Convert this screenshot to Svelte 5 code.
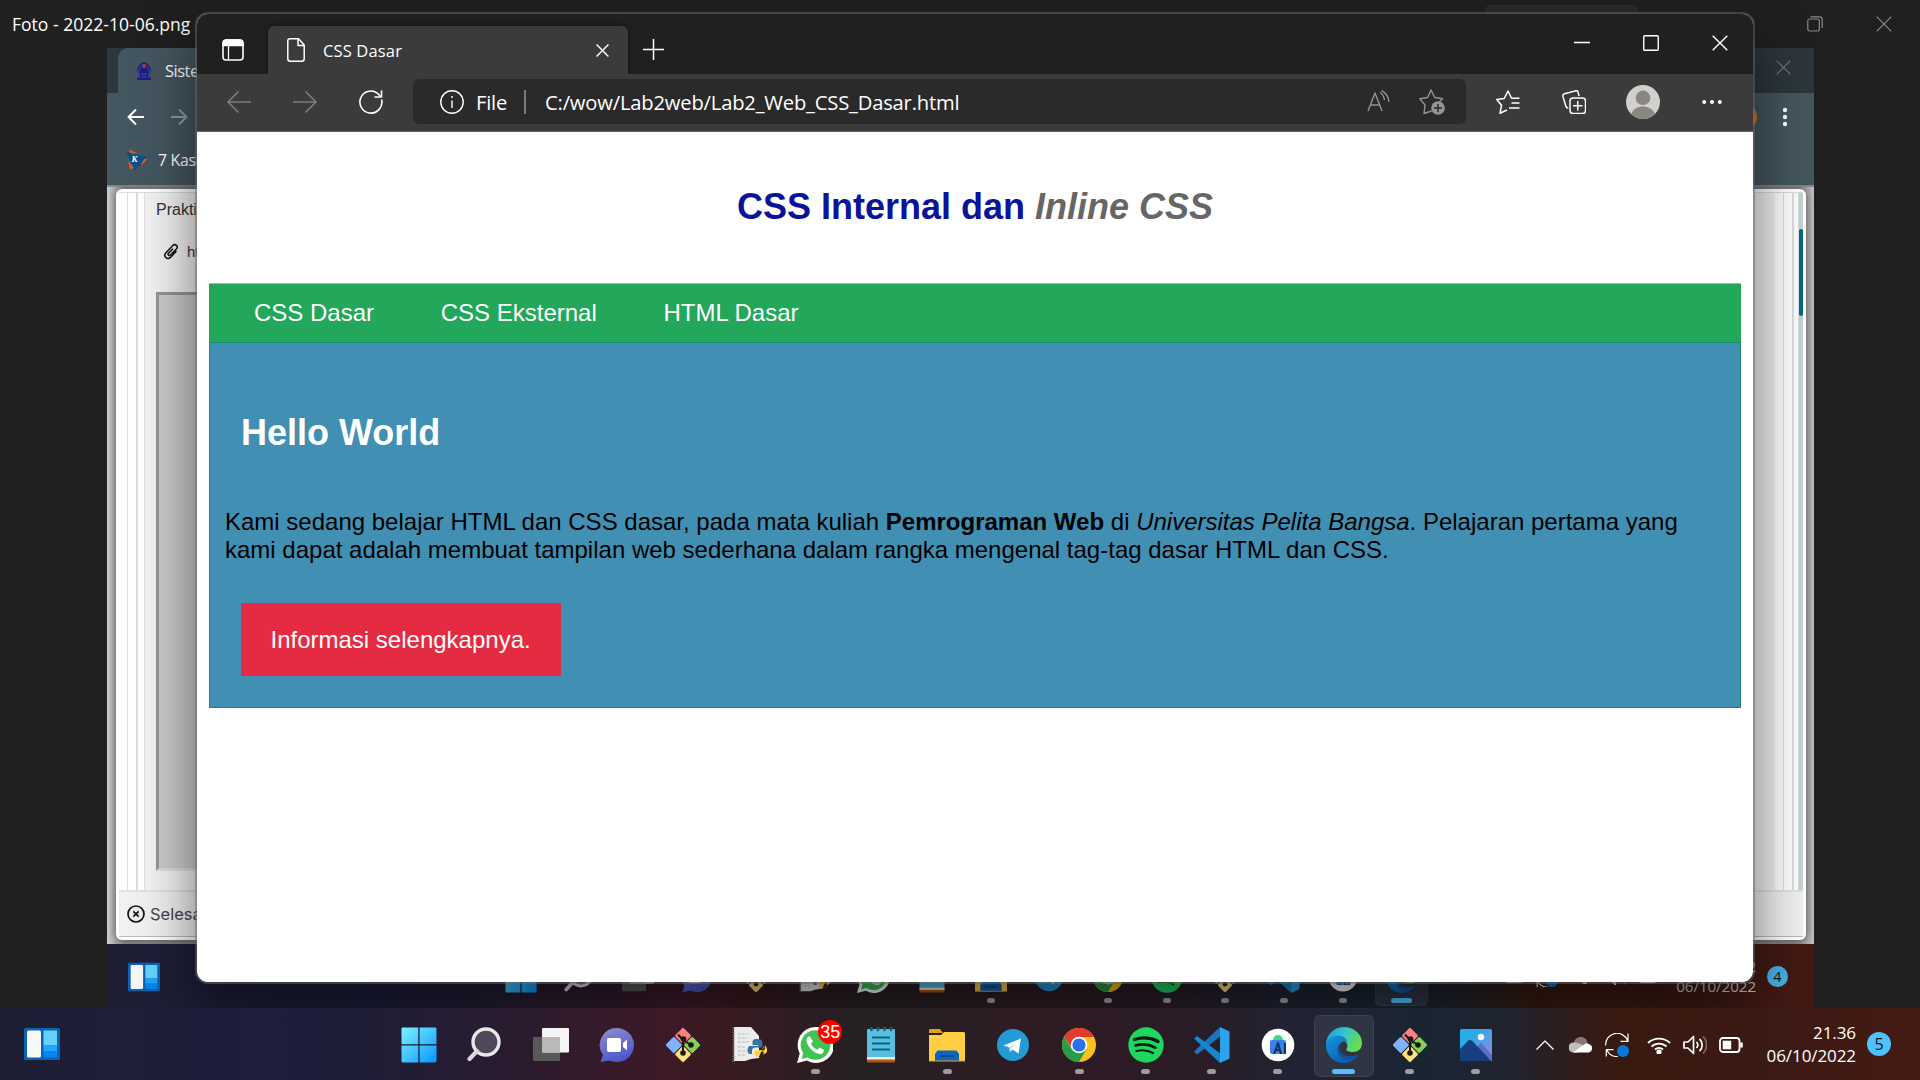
<script>
  const apps = [
    { icon: 'start' }, { icon: 'search' }, { icon: 'views' }, { icon: 'chat' },
    { icon: 'git' }, { icon: 'python' }, { icon: 'whatsapp', open: true, badge: '35' },
    { icon: 'notepad' }, { icon: 'folder', open: true }, { icon: 'telegram' },
    { icon: 'chrome', open: true }, { icon: 'spotify', open: true },
    { icon: 'vscode', open: true }, { icon: 'studio', open: true },
    { icon: 'edge', open: true, active: true }, { icon: 'git', open: true },
    { icon: 'photos', open: true }
  ];
  const photoApps = [
    { icon: 'start' }, { icon: 'search' }, { icon: 'views' }, { icon: 'chat' },
    { icon: 'git' }, { icon: 'python' }, { icon: 'whatsapp' }, { icon: 'notepad' },
    { icon: 'folder', open: true }, { icon: 'telegram' }, { icon: 'chrome', open: true },
    { icon: 'spotify', open: true }, { icon: 'git', open: true },
    { icon: 'vscode', open: true }, { icon: 'studio', open: true },
    { icon: 'edge', open: true, active: true }
  ];
  const menu = ['CSS Dasar', 'CSS Eksternal', 'HTML Dasar'];
</script>

{#snippet appIcon(name)}
  <svg class="app-icon" viewBox="0 0 36 36">
    {#if name === 'widgets'}
      <rect y="2" width="36" height="32" rx="1.5" fill="#0b63b5" />
      <rect x="3" y="4.500" width="14" height="27" rx="1.500" fill="#f7f7f7" />
      <rect x="19.500" y="4.500" width="13.500" height="15" fill="#63d3fb" />
      <rect x="19.500" y="19.500" width="13.500" height="6" fill="#1ea7fb" />
      <rect x="19.500" y="25.500" width="13.500" height="6" fill="#0786ee" />
    {:else if name === 'start'}
      <defs><linearGradient id="win" x1="0" y1="0" x2="1" y2="1"><stop stop-color="#7cf3ff" /><stop offset="1" stop-color="#0795ff" /></linearGradient></defs>
      <path d="M1.500.5h15.800v16.800H.5V1.500zM18.600.5h15.900l1 1v15.800H18.600zM.5 18.600h16.800v16.900H1.500l-1-1zM18.600 18.600h16.900v15.900l-1 1H18.600z" fill="url(#win)" />
    {:else if name === 'search'}
      <circle cx="19" cy="15" r="13" fill="#50475a" stroke="#e8e8ea" stroke-width="3.400" />
      <path d="M10 24l-7.500 8" stroke="#dadade" stroke-width="4.200" stroke-linecap="round" />
    {:else if name === 'views'}
      <rect x="0" y="10" width="27" height="24" rx="1" fill="#595959" />
      <rect x="9" y="1" width="27" height="24.500" rx="1" fill="#f5f5f5" />
      <path d="M9 10h18v15.500H10l-1-1z" fill="#b9b9b9" />
    {:else if name === 'chat'}
      <defs><linearGradient id="cht" x1="0" y1="0" x2="0.4" y2="1"><stop stop-color="#8f8fcd" /><stop offset="1" stop-color="#5059c9" /></linearGradient></defs>
      <path d="M18 1a17 17 0 1 1-7 32.500L1.500 35 4 28A17 17 0 0 1 18 1z" fill="url(#cht)" />
      <rect x="8" y="11" width="14" height="14" rx="2" fill="#fff" />
      <path d="M24 16l4-3.500v11L24 20z" fill="#fff" />
    {:else if name === 'git'}
      <g transform="rotate(45 18 18)">
        <rect x="5.500" y="5.500" width="12" height="12" rx="1.500" fill="#ff7f7f" />
        <rect x="18.500" y="5.500" width="12" height="12" rx="1.500" fill="#86cf5c" />
        <rect x="18.500" y="18.500" width="12" height="12" rx="1.500" fill="#ffe07a" />
        <rect x="5.500" y="18.500" width="12" height="12" rx="1.500" fill="#80b3ff" />
      </g>
      <path d="M13 7.500l5 5.500v13M18 13l8 5" stroke="#1e1718" stroke-width="2" fill="none" />
      <circle cx="18.500" cy="12" r="2.800" fill="#1e1718" /><circle cx="26" cy="18" r="2.800" fill="#1e1718" /><circle cx="18" cy="26" r="2.800" fill="#1e1718" />
    {:else if name === 'python'}
      <path d="M3 0h17l8 9v22l-8 1-6 2H3z" fill="#ececec" />
      <path d="M2.500 0v35" stroke="#777" stroke-width="2" stroke-dasharray="1.200 1.200" />
      <path d="M7 7h10M7 11h9M7 15h11M7 20h7M7 24h9M7 28h8" stroke="#bdbdbd" stroke-width="1" stroke-dasharray="3 1" />
      <path d="M26 12c-4 0-4.500 1.500-4.500 4v2H27v1h-8c-3 0-3.500 8 0 8h2v-3.500c0-2 1.500-3 3.500-3h5c2 0 2-1.500 2-4.500 0-3-1.500-4-5.500-4z" fill="#3572a5" />
      <path d="M28 30c4 0 4.500-1.500 4.500-4v-1.500H27V23.500h5c2.500 0 2-4 1.500-5 2.500 0 4 8 .5 8l-1.500 1c0 2-2 2.500-5 2.500-3 0-4-1.500-4-3.500 0-3 2-3.500 4-3.500h3l2-2v-2" fill="#ffd43b" />
    {:else if name === 'whatsapp'}
      <path d="M18 0a18 18 0 1 1-8 33.500L0 36l2.700-9.500A18 18 0 0 1 18 0z" fill="#fff" />
      <path d="M18 3.200a14.800 14.800 0 1 1-7.400 27.300l-6 1.600 1.600-5.900A14.800 14.800 0 0 1 18 3.200z" fill="#3fc351" />
      <path d="M13 9.500c-1.500-.5-4 1.500-3.500 4.500 1 6 6.500 11.500 12.500 13 3 .6 5-1.500 5-4l-4.500-2.500-2 2.300c-3-1-5.500-3.500-6.500-6.500l2-1.800z" fill="#fff" />
    {:else if name === 'notepad'}
      <rect x="4" y="2" width="28" height="31" rx="1" fill="#59bfdd" /><rect x="4" y="30" width="28" height="3" fill="#eee" /><rect x="4" y="32.500" width="28" height="3" rx="1" fill="#b5540b" />
      <path d="M8.500 0v3M15 0v3M21.500 0v3M28 0v3" stroke="#07658c" stroke-width="2.600" stroke-linecap="round" />
      <path d="M9 10.500h18M9 16.500h18M9 22.500h18" stroke="#07658c" stroke-width="1.800" />
    {:else if name === 'folder'}
      <path d="M0 3l1-1h10l3 4H0z" fill="#dfa103" /><path d="M0 8h12l3-3h20l1 1v28H0z" fill="#ffce45" />
      <path d="M6 34v-7l2.500-3.500h19L30 27v7z" fill="#0a67bd" /><path d="M11 29h14" stroke="#063d80" stroke-width="1.500" /><path d="M0 34h36" stroke="#e8a31b" />
    {:else if name === 'telegram'}
      <circle cx="18" cy="18" r="16" fill="#239bd5" />
      <path d="M8.500 18.500L26 11.500l-2.500 15-6-4-2.500 2.500-.5-4.500z" fill="#fff" /><path d="M14 21l8-6-6 7-1 3z" fill="#bfe0f3" />
    {:else if name === 'chrome'}
      <circle cx="18" cy="18" r="17" fill="#fbc21a" />
      <path d="M3.300 9.500A17 17 0 0 1 33 10H18l-7 12z" fill="#e23c30" />
      <path d="M3.300 9.500A17 17 0 0 0 18 35l7.500-13h-15z" fill="#2a9b49" />
      <circle cx="18" cy="18" r="8.300" fill="#fff" /><circle cx="18" cy="18" r="6.600" fill="#2b72e8" />
    {:else if name === 'spotify'}
      <circle cx="18" cy="18" r="17.700" fill="#1ed75f" />
      <path d="M6.500 12.500c8-2.500 17-1.500 23.500 2" stroke="#0a1b10" stroke-width="3.300" fill="none" stroke-linecap="round" />
      <path d="M7.500 18.500c7-2 14-1 20 2.200" stroke="#0a1b10" stroke-width="2.700" fill="none" stroke-linecap="round" />
      <path d="M8.500 24c6-1.500 11.500-.8 16.500 2" stroke="#0a1b10" stroke-width="2.200" fill="none" stroke-linecap="round" />
    {:else if name === 'vscode'}
      <path d="M0 24.500L26 0l1 9L3 27.500z" fill="#1976b8" /><path d="M0 11.500l3-2.500L27 27l-1 9z" fill="#1687cf" />
      <path d="M26 0l9.500 4.500v27L26 36z" fill="#2ba3ee" />
    {:else if name === 'studio'}
      <circle cx="18" cy="18" r="16.300" fill="#fff" />
      <path d="M13 13a5 5 0 0 1 10 0z" fill="#3ddc84" /><rect x="10" y="13" width="16" height="14" rx="2" fill="#3d7fe8" />
      <path d="M14 27l4-11 3 11M15.500 23h4M25 16v11" stroke="#0b335c" stroke-width="2" fill="none" />
    {:else if name === 'edge'}
      <defs>
        <linearGradient id="edg" x1="0" y1="0" x2="1" y2=".5"><stop stop-color="#1793dc" /><stop offset=".5" stop-color="#33c5cf" /><stop offset="1" stop-color="#67dd4c" /></linearGradient>
        <linearGradient id="edb" x1="0" y1="0" x2=".8" y2="1"><stop stop-color="#1596df" /><stop offset="1" stop-color="#0b57a8" /></linearGradient>
      </defs>
      <path d="M0 17C1 6 9 0 18 0c10 0 18 7 18 16 0 6-4 9-9 9-4 0-7-1-6.500-3 2-3 1-8-4.500-9S3 12 0 17z" fill="url(#edg)" />
      <path d="M0 17c2-6 7-8.500 12-8.500 5 0 8.500 3 9 6-6-1-9 4-7.500 9 2 6 10 8 19 4C29 33 24 36 18 36 7 36-.5 27 0 17z" fill="url(#edb)" />
      <path d="M14.500 14.500c-4 4-4 13 1.500 17 5 3 12 1 16.500-4-9 4-17 2-19-4-1-4-.5-7 1-9z" fill="#1450a0" />
    {:else if name === 'photos'}
      <defs><linearGradient id="sky" x1="0" y1="0" x2="1" y2="1"><stop offset=".3" stop-color="#28abea" /><stop offset="1" stop-color="#a184d8" /></linearGradient></defs>
      <rect x="2" y="2" width="32" height="32" rx="1.500" fill="url(#sky)" />
      <path d="M17 22l6-6 11 12v6H17z" fill="#5b6cc9" /><path d="M2 22l9-9 3 .5L33 34H2z" fill="#173f80" /><circle cx="23" cy="10" r="3.200" fill="#f4f7fb" />
    {/if}
  </svg>
{/snippet}

{#snippet cross(cls)}
  <svg class={cls} viewBox="0 0 16 16"><path d="M.7.7l14.600 14.600M15.300.7L.7 15.300" /></svg>
{/snippet}

{#snippet statusIcons()}
  <div class="status">
    <svg class="chev" viewBox="0 0 18 10"><path d="M.5 9.500L9 1l8.500 8.500" /></svg>
    <svg class="cloud" viewBox="0 0 24 16"><path d="M5 12A6 6 0 0 1 5 5a7 7 0 0 1 13-1l2 5z" fill="#8b7772" /><path d="M4 15.500A4.500 4.500 0 0 1 5 5.500c4-.5 8 2 12 5l-8 5z" fill="#c4bcba" /><path d="M4 15.500l11-8a5 5 0 0 1 5-.5 4.500 4.500 0 0 1 0 8.500z" fill="#fff" /></svg>
    <svg class="sync" viewBox="0 0 24 24"><path d="M.7 12.500A11.300 11.300 0 0 1 22.500 7.500M23 .5v7.800h-7.500M1.300 23.500v-6.800H8.500M2 17.500a11.500 11.500 0 0 0 11 6" /><circle cx="18" cy="18" r="6" /></svg>
    <svg class="wifi" viewBox="0 0 24 18"><path d="M1 7a16 16 0 0 1 22 0M4.500 10.500a11 11 0 0 1 15 0M8 13.500a6 6 0 0 1 8 0" /><circle cx="12" cy="16" r="1.700" fill="#fff" /></svg>
    <svg class="sound" viewBox="0 0 24 20"><path d="M1 7h4l5.500-5.500v17L5 13H1zM13.500 7a4.500 4.500 0 0 1 0 6M16.500 4a8 8 0 0 1 0 12" /><path d="M20 1.500a12 12 0 0 1 0 17" opacity=".35" /></svg>
    <svg class="battery" viewBox="0 0 24 16"><rect x="1" y="1" width="19.500" height="14" rx="3" /><rect x="3.700" y="3.700" width="8.500" height="8.600" fill="#fff" stroke="none" /><path d="M22.500 5.500v5" stroke-width="2.500" /></svg>
  </div>
{/snippet}

<div class="desktop">
  <section class="viewer">
    <header class="viewer-bar">
      <span class="viewer-title">Foto - 2022-10-06.png</span>
      <div class="viewer-controls">
        <svg class="restore" viewBox="0 0 16 16"><rect x=".8" y="3" width="11.500" height="12" rx="2" /><path d="M3.500.8h9a2.700 2.700 0 0 1 2.700 2.700v8.500" /></svg>
        {@render cross('x16')}
      </div>
    </header>
    <div class="photo">
      <div class="p-tabs">
        <div class="p-edge"></div>
        <div class="p-tab">
          <svg class="crest" viewBox="0 0 18 20"><path d="M2 19h14v-2l-2-2 1-3 1-4-3-5-4-2-4 2-3 5 1 4 1 3-2 2z" fill="#1c1f80" /><path d="M4 17V9a5 5 0 0 1 10 0v8M6 13h6M6 16h6" stroke="#3f4cae" fill="none" /><path d="M9 3v4" stroke="#c33a36" stroke-width="2.500" /></svg>
          <span>Sistem</span>
        </div>
        <div class="p-caption">{@render cross('x14')}</div>
      </div>
      <div class="p-nav">
        <svg class="p-arrow" viewBox="0 0 18 18"><path d="M17 9H2M9 1.500L1.500 9 9 16.500" /></svg>
        <svg class="p-arrow dim" viewBox="0 0 18 18"><path d="M1 9h15M9 1.500L16.500 9 9 16.500" /></svg>
        <div class="p-avatar"></div>
        <svg class="p-dots" viewBox="0 0 6 20"><circle cx="3" cy="3" r="2.200" /><circle cx="3" cy="10" r="2.200" /><circle cx="3" cy="17" r="2.200" /></svg>
      </div>
      <div class="p-marks">
        <svg class="kmark" viewBox="0 0 22 22"><path d="M3 .5l8 3.500-7 2zM21.500 10l-6 6.500 1-6.500zM2 12l2 8.500 4-2z" fill="#d95a2b" /><path d="M.5 3L20 8 9 21.500z" fill="#07518e" /><text x="5.500" y="13">K</text></svg>
        <span>7 Kasus</span>
      </div>
      <div class="p-page">
        <div class="sheet">
          <div class="sheet-main">
            <div class="stripes"></div>
            <div class="sheet-body">
              <p class="s-title">Praktikum</p>
              <p class="s-link">
                <svg class="clip" viewBox="0 0 16 17"><path d="M13.500 8l-5.800 6.200c-3.500 3.400-8-1-4.700-4.500L9.800 2.500c2.500-2.300 6 .8 3.600 3.500L7.500 12c-1.600 1.500-3.200-.3-2-1.700L10 5.700" /></svg>
                <span>https</span>
              </p>
              <div class="frame"></div>
            </div>
            <div class="stripes right"></div>
            <div class="scroll"><div class="thumb"></div></div>
          </div>
          <div class="sheet-foot">
            <svg class="cancel" viewBox="0 0 18 18"><circle cx="9" cy="9" r="8" /><path d="M6.300 6.300l5.400 5.400M11.700 6.300l-5.400 5.400" /></svg>
            <span>Selesai</span>
          </div>
        </div>
      </div>
      <div class="taskbar small">
        <div class="side">{@render appIcon('widgets')}</div>
        <div class="apps">
          {#each photoApps as app}
            <div class="app" class:active={app.active}>
              {@render appIcon(app.icon)}
              {#if app.open}<i class="dot"></i>{/if}
            </div>
          {/each}
        </div>
        <div class="tray">
          {@render statusIcons()}
          <div class="clock"><span>19.22</span><span>06/10/2022</span></div>
          <span class="count">4</span>
        </div>
      </div>
    </div>
  </section>
  <div class="viewer-pill"></div>

  <section class="browser">
    <header class="tabstrip">
      <svg class="tabmenu" viewBox="0 0 22 22"><rect x="1" y="1" width="20" height="20" rx="3" fill="none" stroke="#fff" stroke-width="1.600" /><path d="M1 6.500V3.500L3.500 1h15L21 3.500v3z" fill="#fff" stroke="#fff" stroke-width="1.300" /><path d="M6.500 7v14" stroke="#fff" stroke-width="1.300" /></svg>
      <div class="tab">
        <svg class="doc" viewBox="0 0 18 24"><path d="M3 .8h8.500L17.200 7v13.700a2.500 2.500 0 0 1-2.500 2.500H3.300A2.500 2.500 0 0 1 .8 20.700V3A2.200 2.200 0 0 1 3 .8zM11 1v6.500h6" /></svg>
        <span>CSS Dasar</span>
        {@render cross('x12')}
      </div>
      <svg class="plus" viewBox="0 0 21 21"><path d="M10.500 0v21M0 10.500h21" /></svg>
      <div class="controls">
        <svg viewBox="0 0 16 16"><path d="M0 7.500h16" /></svg>
        <svg viewBox="0 0 16 16"><rect x=".75" y=".75" width="14.500" height="14.500" rx="1" /></svg>
        {@render cross('x16')}
      </div>
    </header>
    <div class="toolbar">
      <div class="nav-buttons">
        <svg class="faded" viewBox="0 0 24 24"><path d="M24 12H1M11.500 1.500L1 12l10.500 10.500" /></svg>
        <svg class="faded" viewBox="0 0 24 24"><path d="M0 12h23M12.500 1.500L23 12 12.500 22.500" /></svg>
        <svg viewBox="0 0 24 24"><path d="M22.600 9.500A11 11 0 1 1 18.500 3.300L22 7M22.500.5V7H15.500" /></svg>
      </div>
      <div class="address">
        <svg class="info" viewBox="0 0 24 24"><circle cx="12" cy="12" r="11.200" /><path d="M12 10.500V18M12 6v2" /></svg>
        <span class="scheme">File</span>
        <i class="rule"></i>
        <span class="url">C:/wow/Lab2web/Lab2_Web_CSS_Dasar.html</span>
        <svg class="read" viewBox="0 0 24 24"><path d="M1 21L8 3l7 18M3.500 15h9M13 2.500c2.500 1.500 4 4 4.500 7.500M14.500.5c4 2 7 6 7.500 11.500" /></svg>
        <svg class="fav" viewBox="0 0 26 26"><path d="M12.500 22L5 24.500l1-8.500L.8 9.800l7.800-1.300L12 1l3.800 7.500 7.700 1.300-3 3" /><circle cx="19" cy="19" r="6.800" /><path class="ink" d="M19 15v8M15 19h8" /></svg>
      </div>
      <svg class="tool" viewBox="0 0 24 24"><path d="M11 20l-7 3.300 1.500-8L.8 9.500l7.400-1L12 1l3.500 7.300h8M15.500 13h8M13 18h10.500" /></svg>
      <svg class="tool" viewBox="0 0 24 24"><path d="M17 6l-1-4a1.700 1.700 0 0 0-2-1.200L2.500 3.700A2.200 2.200 0 0 0 .9 6.400L3.800 16a2.500 2.500 0 0 0 2.500 2" /><rect x="8" y="8" width="15.500" height="15.500" rx="3" /><path d="M15.750 11v9.500M11 15.750h9.500" /></svg>
      <svg class="avatar" viewBox="0 0 34 34"><circle cx="17" cy="17" r="17" fill="#d1d0cc" /><circle cx="17" cy="12.800" r="7.300" fill="#8a8681" /><path d="M5 29c2-5 7-7.500 12-7.500S27 24 29 29a17 17 0 0 1-24 0z" fill="#8a8681" /></svg>
      <svg class="more" viewBox="0 0 20 6"><circle cx="2.200" cy="3" r="2" /><circle cx="10" cy="3" r="2" /><circle cx="17.800" cy="3" r="2" /></svg>
    </div>
    <main class="page">
      <h1>CSS Internal dan <em>Inline CSS</em></h1>
      <nav>
        {#each menu as item}<a href="#top">{item}</a>{/each}
      </nav>
      <div class="hero">
        <h2>Hello World</h2>
        <p>Kami sedang belajar HTML dan CSS dasar, pada mata kuliah <b>Pemrograman Web</b> di <em>Universitas Pelita Bangsa</em>. Pelajaran pertama yang kami dapat adalah membuat tampilan web sederhana dalam rangka mengenal tag-tag dasar HTML dan CSS.</p>
        <a class="button" href="#info">Informasi selengkapnya.</a>
      </div>
    </main>
  </section>

  <footer class="taskbar">
    <div class="side">{@render appIcon('widgets')}</div>
    <div class="apps">
      {#each apps as app}
        <div class="app" class:active={app.active}>
          {@render appIcon(app.icon)}
          {#if app.open}<i class="dot"></i>{/if}
          {#if app.badge}<b class="badge">{app.badge}</b>{/if}
        </div>
      {/each}
    </div>
    <div class="tray">
      {@render statusIcons()}
      <div class="clock"><span>21.36</span><span>06/10/2022</span></div>
      <span class="count">5</span>
    </div>
  </footer>
</div>

<style>
  :global(body) { margin: 0; background: #202020; }
  .desktop { position: relative; width: 1920px; height: 1080px; overflow: hidden; background: #202020; color: #fff; font-family: "Open Sans", "Noto Sans", sans-serif; }
  .desktop :global(*) { box-sizing: border-box; }
  svg { display: block; flex: none; fill: none; stroke-linejoin: round; }
  p, h1, h2 { margin: 0; }

  /* photo viewer behind the browser */
  .viewer { position: absolute; inset: 0 0 72px; }
  .viewer-bar { display: flex; justify-content: space-between; height: 48px; padding: 0 28px 0 12px; align-items: center; }
  .viewer-title { font-size: 17.5px; letter-spacing: 0.02px; }
  .viewer-controls { display: flex; gap: 53px; }
  .restore, .x16 { width: 16px; height: 16px; stroke: #8a8a8a; stroke-width: 1.2; }
  .viewer-pill { position: absolute; left: 1485px; top: 5px; width: 153px; height: 30px; border-radius: 6px; background: #2b2b2b; border: 1px solid #303030; }
  .photo { width: 1707px; height: 960px; margin-left: 107px; overflow: hidden; display: flex; flex-direction: column; background: #44565f; }
  .p-tabs { display: flex; height: 45px; background: #2c373e; }
  .p-edge { width: 11px; background: #2c373e; box-shadow: 0 0 0 #44565f; border-bottom-right-radius: 9px; }
  .p-tab { width: 200px; display: flex; align-items: center; gap: 12px; padding: 0 0 0 17px; font-size: 16.5px; letter-spacing: -0.5px; background: #44565f; border-radius: 10px 0 0; }
  .crest { width: 18px; height: 20px; }
  .p-caption { flex: 1; display: flex; justify-content: flex-end; align-items: center; padding-right: 23px; background: #2c363c; }
  .x14 { width: 15px; height: 15px; stroke: #717e84; stroke-width: 1.2; margin-top: -6px; }
  .p-nav { display: flex; height: 48px; align-items: center; padding: 0 26px 0 20px; }
  .p-arrow { width: 18px; height: 18px; stroke: #fff; stroke-width: 2; margin-right: 25px; }
  .p-arrow.dim { stroke: #8f9ba1; }
  .p-avatar { width: 26px; height: 26px; border-radius: 50%; background: #e8710a; margin-left: auto; margin-right: 25px; }
  .p-dots { width: 6px; height: 20px; fill: #fff; }
  .p-marks { display: flex; height: 44px; align-items: center; gap: 10px; padding: 0 0 7px 19px; font-size: 15.8px; letter-spacing: -0.3px; }
  .kmark { width: 22px; height: 22px; }
  .kmark text { font: italic bold 9px "Liberation Serif", serif; fill: #fff; }
  .p-page { height: 759px; padding: 2px 8px 4px 9px; background: linear-gradient(90deg, #d0d0d0, #8c8c8c 1%, #8c8c8c 99%, #c4c4c4); border-top: 2px solid #848e93; }
  .sheet { height: 100%; border-radius: 6px; border: 3px solid #fff; background: #f3f3f3; display: flex; flex-direction: column; box-shadow: 0 0 10px #555; }
  .sheet-main { flex: 1; display: flex; border-top: 1px solid #ddd; }
  .stripes { width: 26px; border-right: 1px solid #e0e0e0; background: linear-gradient(90deg, #fff 8px, #ddd 8px 9px, #fff 9px 17px, #ddd 17px 19px, #fff 19px); }
  .stripes.right { margin-left: auto; width: 24px; }
  .scroll { width: 4px; background: #c2d3d7; padding-top: 36px; }
  .thumb { height: 87px; border-radius: 2px; background: #026b87; }
  .sheet-body { width: 300px; padding: 7px 0 0 11px; color: #333; }
  .s-title { font: 16px/20px "Liberation Sans", sans-serif; }
  .s-link { display: flex; align-items: center; gap: 8px; height: 20px; margin: 21px 0 0 7px; font: 15px "Liberation Sans", sans-serif; }
  .clip { width: 16px; height: 17px; stroke: #111; stroke-width: 1.5; }
  .frame { height: 579px; margin-top: 31px; border: 3px solid #969696; border-bottom-color: #ddd; background: #cdcdcd; }
  .sheet-foot { height: 47px; display: flex; align-items: center; gap: 5px; padding-left: 8px; color: #444; font: 16.5px Inter, sans-serif; border-top: 2px solid #e2e2e2; border-bottom: 1px solid #bbb; background: #f1f1f1; }
  .cancel { width: 18px; height: 18px; stroke: #111; stroke-width: 1.7; }

  /* browser window */
  .browser { position: absolute; left: 197px; top: 14px; width: 1556px; height: 968px; border-radius: 11px; background: #fff; box-shadow: 0 0 0 2px rgba(105, 105, 105, .5), 0 24px 54px 4px rgba(0, 0, 0, .5); display: flex; flex-direction: column; overflow: hidden; }
  .tabstrip { height: 60px; flex: none; display: flex; align-items: flex-start; background: #202020; padding-left: 25px; }
  .tabmenu { width: 22px; height: 22px; margin: 25px 24px 0 0; }
  .tab { display: flex; align-items: center; width: 360px; height: 48px; margin-top: 12px; padding: 0 19px 0 19px; background: #3b3b3b; border-radius: 6px 6px 0 0; box-shadow: 0 0 5px #111; font-size: 16.5px; letter-spacing: 0.15px; }
  .doc { width: 18px; height: 24px; stroke: #fff; stroke-width: 1.5; margin-right: 18px; }
  .x12 { width: 13px; height: 13px; margin-left: auto; stroke: #fff; stroke-width: 1.8; }
  .plus { width: 21px; height: 21px; margin: 25px 0 0 15px; stroke: #fff; stroke-width: 1.5; }
  .controls { display: flex; gap: 53px; margin: 21px 25px 0 auto; }
  .controls svg { width: 16px; height: 16px; stroke: #fff; stroke-width: 1.4; }
  .toolbar { height: 58px; flex: none; display: flex; align-items: center; background: #3b3b3b; border-bottom: 1px solid #666; padding: 0 31px 2px 30px; }
  .nav-buttons { display: flex; gap: 42px; width: 186px; stroke: #fff; }
  .nav-buttons svg { width: 24px; height: 24px; stroke-width: 1.6; }
  .nav-buttons .faded { stroke: #7c7c7c; }
  .address { width: 1053px; height: 45px; border-radius: 6px; background: #2a2a2a; display: flex; align-items: center; padding: 0 21px 0 27px; font-size: 20.2px; }
  .info { width: 24px; height: 24px; stroke: #fff; stroke-width: 1.4; }
  .scheme { margin-left: 12px; width: 37px; letter-spacing: -0.2px; }
  .rule { width: 2px; height: 24px; margin-left: 11px; background: #7a7a7a; }
  .url { margin-left: 19px; letter-spacing: -0.19px; }
  .read { width: 24px; height: 24px; margin-left: auto; stroke: #949494; stroke-width: 1.4; }
  .fav { width: 26px; height: 26px; margin-left: 28px; stroke: #949494; stroke-width: 1.4; }
  .fav circle { fill: #949494; stroke: none; }
  .fav .ink { stroke: #2a2a2a; }
  .tool { width: 24px; height: 24px; margin-left: 42px; stroke: #fff; stroke-width: 1.5; }
  .tool:first-of-type { margin-left: 30px; }
  .avatar { width: 34px; height: 34px; margin-left: 40px; }
  .more { width: 20px; height: 6px; margin-left: auto; fill: #fff; }

  .page { padding: 0 12px; font: 24px/28px "Liberation Sans", Arial, sans-serif; color: #000; }
  h1 { padding-top: 54px; height: 151px; font-size: 36px; line-height: 42px; text-align: center; color: #0a149b; }
  h1 em { color: #666; }
  nav { display: flex; gap: 6.67px; height: 59px; padding-left: 15px; border-top: 1px solid #7cc9b8; background: #22a75b; }
  nav a { padding: 15px 30px; color: #fff; text-decoration: none; }
  .hero { height: 366px; border: 1px solid #1d8a67; background: #418fb2; padding: 69px 15px 0; display: flex; flex-direction: column; align-items: flex-start; }
  h2 { padding-left: 16px; font-size: 36px; line-height: 42px; color: #fff; }
  .hero p { margin-top: 54px; }
  .button { margin: 39px 0 0 16px; padding: 23px 30px 22px 29.500px; background: #e42b42; color: #fff; text-decoration: none; }

  /* taskbar, at full size and inside the photo */
  .taskbar { --slot: 66.060px; --icon: 36px; position: absolute; left: 0; bottom: 0; width: 1920px; height: 72px; display: flex; align-items: stretch; background: linear-gradient(90deg, #1e1f35, #1c1e3b 15%, #211d34 21%, #2d1b2e 28%, #3c1927 34.500%, #381a20 37.500%, #252024 45%, #2e1c24 53%, #2b1b24 61%, #222232 67%, #1a2532 74%, #202330 78.500%, #38190f 84%, #3c1a14 92%, #451913); }
  .side { width: 386px; padding: 18px 0 0 24px; }
  .app-icon { position: relative; width: var(--icon); height: var(--icon); }
  .apps { display: flex; }
  .app { position: relative; width: var(--slot); display: flex; flex-direction: column; align-items: center; padding-top: 19px; }
  .dot { width: 9px; height: 5px; margin-top: 6px; border-radius: 3px; background: #a09ba0; }
  .active .dot { position: relative; width: 23px; background: #4cc2ff; }
  .active::before { content: ""; position: absolute; left: 3px; right: 3px; top: 7px; height: 60px; border-radius: 6px; background: rgba(255, 255, 255, .08); border: 1px solid rgba(255, 255, 255, .06); }
  .badge { position: absolute; left: 36px; top: 12px; width: 24px; height: 24px; border-radius: 50%; background: #f00; font: 18px/24px "Liberation Sans", sans-serif; text-align: center; }
  .tray { flex: 1; display: flex; align-items: center; padding: 0 29px 0 27px; }
  .status { display: flex; align-items: center; stroke: #fff; padding-top: 1px; }
  .chev { width: 18px; height: 10px; margin: 0 15px 0 0; stroke-width: 1.3; }
  .cloud { width: 24px; height: 16px; margin-right: 12px; stroke: none; }
  .sync { width: 24px; height: 24px; stroke-width: 1.2; }
  .sync circle { fill: #0878dc; stroke: none; }
  .wifi { width: 24px; height: 18px; margin-left: 18px; stroke-width: 1.8; }
  .sound { width: 24px; height: 20px; margin-left: 12px; stroke-width: 1.7; }
  .battery { width: 24px; height: 16px; margin-left: 12px; stroke-width: 1.8; }
  .clock { display: flex; flex-direction: column; align-items: flex-end; margin-left: auto; font-size: 17px; line-height: 23px; letter-spacing: -0.08px; }
  .count { width: 24px; height: 24px; margin-left: 11px; border-radius: 50%; background: #4cc2ff; color: #111; font-size: 16px; line-height: 24px; text-align: center; }

  .small { --slot: 58.730px; --icon: 32px; position: static; width: 1707px; height: 64px; flex: none; }
  .small .side { width: 384.500px; padding: 17px 0 0 21px; }
  .small .app { padding-top: 17px; }
  .small .dot { width: 8px; height: 5px; margin-top: 5px; }
  .small .active .dot { width: 21px; }
  .small .active::before { top: 6px; height: 54px; }
  .small .status { zoom: .889; }
  .small .tray { padding: 0 26px 0 44px; }
  .small .clock { font-size: 15.200px; line-height: 20px; color: #ccc; }
  .small .count { width: 21px; height: 21px; margin-left: 11px; line-height: 21px; font-size: 14.500px; background: #47b2ea; }
</style>
